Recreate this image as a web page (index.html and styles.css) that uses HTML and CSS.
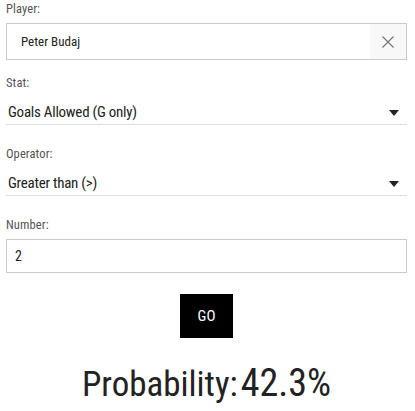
FILE: index.html
```html
<!DOCTYPE html>
<html>
<head>
<meta charset="utf-8">
<link rel="stylesheet" href="styles.css">
</head>
<body>
<div class="form">
  <div class="field">
    <label class="label">Player:</label>
    <div class="player-box">
      <span class="player-name">Peter Budaj</span>
      <span class="clear">
        <svg width="12" height="12" viewBox="0 0 12 12"><path d="M0.5 0.5L11.5 11.5M11.5 0.5L0.5 11.5" stroke="#777" stroke-width="1.2" fill="none"/></svg>
      </span>
    </div>
  </div>
  <div class="field">
    <label class="label">Stat:</label>
    <div class="select">
      <span class="select-text">Goals Allowed (G only)</span>
      <span class="arrow"></span>
    </div>
  </div>
  <div class="field">
    <label class="label">Operator:</label>
    <div class="select">
      <span class="select-text">Greater than (&gt;)</span>
      <span class="arrow"></span>
    </div>
  </div>
  <div class="field">
    <label class="label">Number:</label>
    <div class="number-box">2</div>
  </div>
  <div class="actions">
    <button class="go">GO</button>
  </div>
  <div class="result">
    <span class="result-label">Probability:</span><span class="result-value">42.3%</span>
  </div>
</div>
</body>
</html>
```

FILE: styles.css
```css
html, body {
  margin: 0;
  padding: 0;
  background: #fff;
}
body {
  font-family: "Roboto Condensed", Roboto, "Liberation Sans", sans-serif;
  font-stretch: condensed;
  color: #222;
}
.form {
  padding: 2px 8px 0 6px;
  display: flex;
  flex-direction: column;
}
.field {
  display: flex;
  flex-direction: column;
}
.label {
  display: block;
  font-size: 12.5px;
  letter-spacing: 0.1px;
  color: #555;
  line-height: 14px;
}
.field + .field {
  margin-top: 16px;
}
.player-box {
  margin-top: 7px;
  height: 35px;
  border: 1px solid #ccc;
  display: flex;
  align-items: center;
}
.player-name {
  flex: 1;
  padding-left: 14px;
  font-size: 13px;
  color: #222;
}
.clear {
  width: 36px;
  height: 35px;
  background: #f8f8f8;
  display: flex;
  align-items: center;
  justify-content: center;
}
.select {
  margin-top: 10px;
  margin-bottom: 6px;
  height: 24px;
  line-height: 24px;
  border-bottom: 1px solid #ddd;
  display: flex;
  align-items: center;
  padding-left: 2px;
}
.select-text {
  flex: 1;
  font-size: 15px;
  letter-spacing: -0.25px;
}
.arrow {
  width: 0;
  height: 0;
  border-left: 5px solid transparent;
  border-right: 5px solid transparent;
  border-top: 6px solid #222;
  margin-right: 8px;
  margin-top: 2px;
}
.number-box {
  margin-top: 7px;
  height: 32px;
  border: 1px solid #ccc;
  display: flex;
  align-items: center;
  padding-left: 8px;
  font-size: 14px;
}
.actions {
  display: flex;
  justify-content: center;
  margin-top: 21px;
}
.go {
  width: 53px;
  height: 44px;
  background: #000;
  color: #fff;
  border: none;
  font-family: inherit;
  font-stretch: condensed;
  font-size: 15px;
  padding: 0;
}
.result {
  display: flex;
  justify-content: center;
  align-items: baseline;
  margin-top: 25px;
  line-height: 40px;
  color: #222;
}
.result-label {
  font-size: 35px;
  margin-right: 3px;
}
.result-value {
  font-size: 38px;
}
```
